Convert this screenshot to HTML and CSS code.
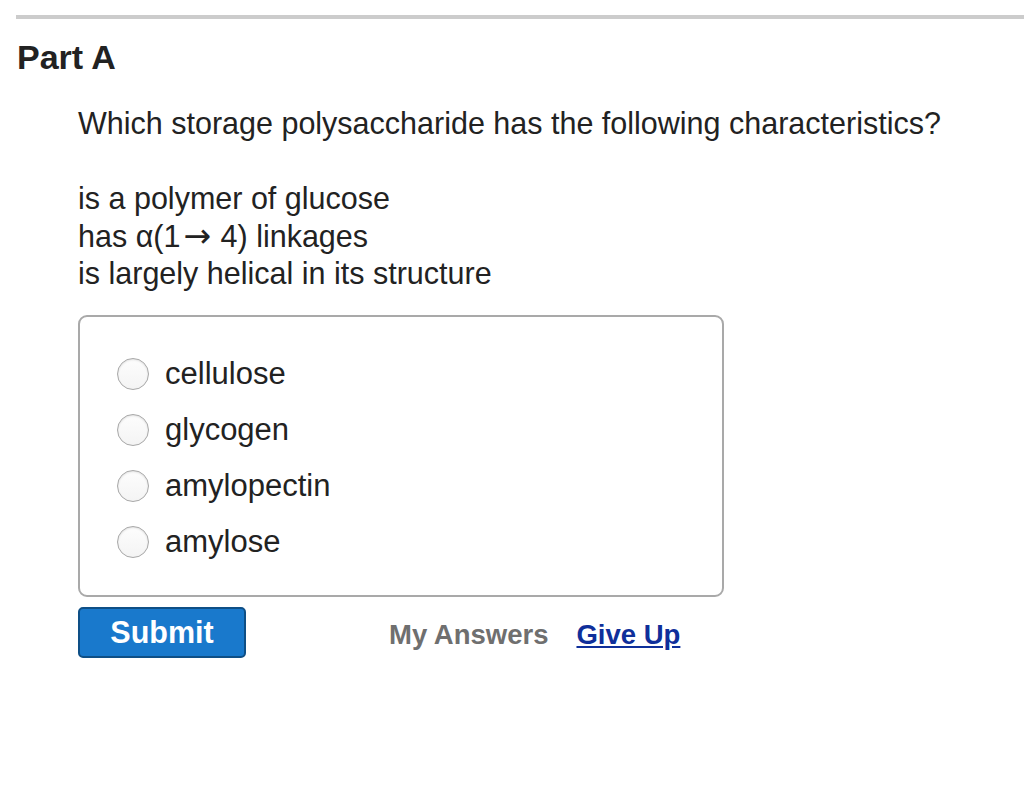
FILE: index.html
```html
<!DOCTYPE html>
<html lang="en">
<head>
    <meta charset="UTF-8">
    <title>Part A</title>
    <link rel="stylesheet" href="styles.css">
</head>
<body>
    <div class="part">
        <h2 class="part-title">Part A</h2>

        <div class="problem">
            <p class="question">Which storage polysaccharide has the following characteristics?</p>

            <p class="traits">
                is a polymer of glucose<br>
                has &alpha;(1<span class="arrow">&rarr;</span> 4) linkages<br>
                is largely helical in its structure
            </p>

            <!-- Answer choices -->
            <div class="choices">
                <label class="choice"><span class="radio"></span>cellulose</label>
                <label class="choice"><span class="radio"></span>glycogen</label>
                <label class="choice"><span class="radio"></span>amylopectin</label>
                <label class="choice"><span class="radio"></span>amylose</label>
            </div>

            <div class="actions">
                <button class="btn-submit">Submit</button>
                <span class="my-answers">My Answers</span>
                <a href="#" class="give-up">Give Up</a>
            </div>
        </div>
    </div>
</body>
</html>
```

FILE: styles.css
```css
* {
    margin: 0;
    padding: 0;
    box-sizing: border-box;
}

body {
    font-family: 'Liberation Sans', Arial, sans-serif;
    color: #222;
    background-color: #fff;
}

.part {
    margin: 15px 0 0 16px;
    border-top: 4px solid #cccccc;
}

.part-title {
    font-size: 34px;
    font-weight: bold;
    color: #222;
    line-height: 38px;
    margin: 19px 0 0 1px;
}

.problem {
    margin-left: 62px;
    font-size: 30.5px;
}

.question {
    margin-top: 28px;
    line-height: 38px;
}

.traits {
    margin-top: 38px;
    line-height: 37.5px;
}

.arrow {
    font-family: 'DejaVu Sans', sans-serif;
    font-size: 33px;
    line-height: 0;
    margin: 0 1px 0 3px;
}

.choices {
    width: 646px;
    height: 282px;
    margin-top: 22px;
    padding: 29px 0 0 37px;
    border: 2px solid #a9a9a9;
    border-radius: 9px;
}

.choice {
    display: flex;
    align-items: center;
    height: 56px;
    font-size: 31px;
}

.radio {
    width: 32px;
    height: 32px;
    margin-right: 16px;
    border: 1px solid #a8a8a8;
    border-radius: 50%;
    background: linear-gradient(#fdfdfd, #f4f4f4);
    box-shadow: inset 0 1px 2px rgba(0,0,0,0.12);
}

.actions {
    display: flex;
    align-items: center;
    margin-top: 10px;
    font-size: 27.5px;
    font-weight: bold;
}

.btn-submit {
    width: 168px;
    height: 51px;
    font-family: inherit;
    font-size: 30.5px;
    font-weight: bold;
    color: #fff;
    background-color: #1979cc;
    border: 2px solid #0e4f86;
    border-radius: 5px;
}

.my-answers {
    margin-left: 143px;
    padding-top: 5px;
    color: #6f6f6f;
}

.give-up {
    margin-left: 28px;
    padding-top: 5px;
    color: #0f2f9a;
    text-decoration: underline;
}
```
